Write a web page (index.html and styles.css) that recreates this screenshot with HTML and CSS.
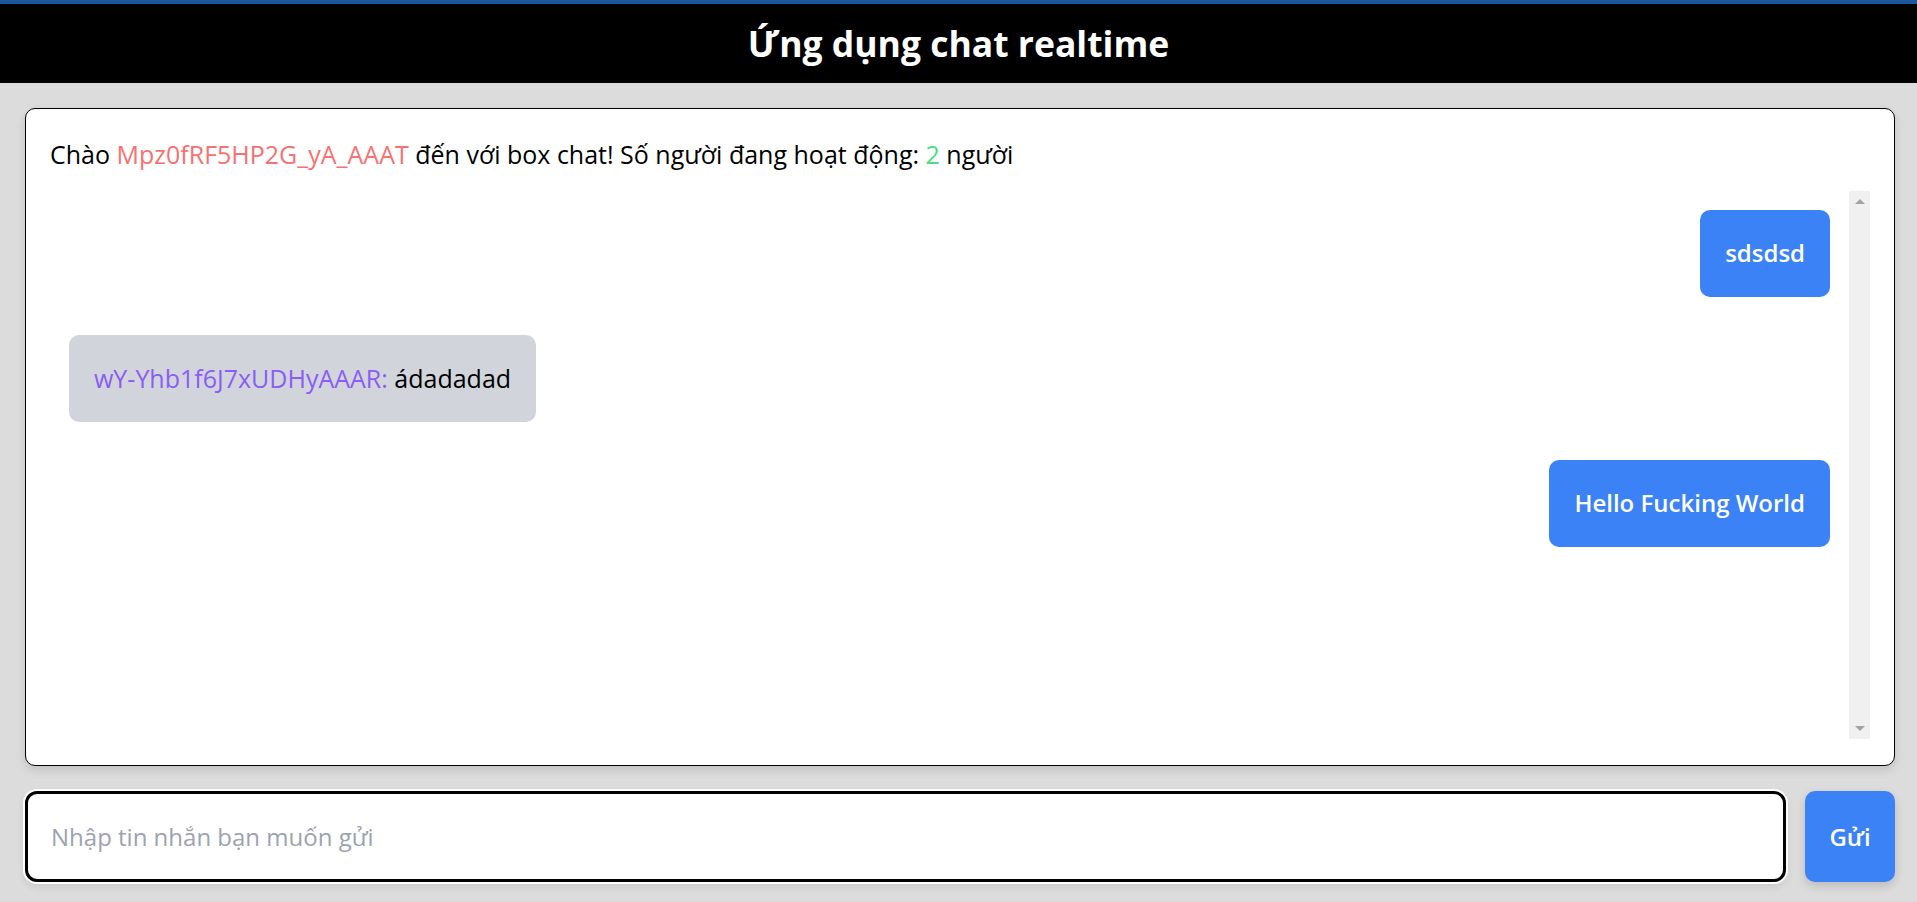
FILE: index.html
```html
<!DOCTYPE html>
<html lang="vi">
<head>
<meta charset="utf-8">
<title>Ứng dụng chat realtime</title>
<link rel="stylesheet" href="styles.css">
</head>
<body>
<header class="topbar">
  <h1 class="title">Ứng dụng chat realtime</h1>
</header>
<main class="page">
  <section class="chat-card">
    <p class="welcome">Chào <span class="me">Mpz0fRF5HP2G_yA_AAAT</span> đến với box chat! Số người đang hoạt động: <span class="count">2</span> người</p>
    <div class="messages-wrap">
      <div class="messages">
        <div class="msg msg-mine">sdsdsd</div>
        <div class="msg msg-other"><span class="sender">wY-Yhb1f6J7xUDHyAAAR:</span> ádadadad</div>
        <div class="msg msg-mine">Hello Fucking World</div>
      </div>
      <div class="scroll-rail" aria-hidden="true">
        <span class="scroll-btn"><span class="arrow arrow-up"></span></span>
        <span class="scroll-btn"><span class="arrow arrow-down"></span></span>
      </div>
    </div>
  </section>
  <form class="composer">
    <input class="composer-input" type="text" placeholder="Nhập tin nhắn bạn muốn gửi">
    <button class="send-btn" type="button">Gửi</button>
  </form>
</main>
</body>
</html>
```

FILE: styles.css
```css
html, body {
  height: 100%;
}

body {
  margin: 0;
  background: #dcdcdc;
  font-family: "Open Sans", "Noto Sans", sans-serif;
  display: flex;
  flex-direction: column;
  height: 100vh;
  overflow: hidden;
}

.topbar {
  flex-shrink: 0;
  height: 79px;
  border-top: 4px solid #1d579f;
  background: #000;
  display: flex;
  align-items: center;
  justify-content: center;
}

.title {
  margin: 0;
  color: #fff;
  font-size: 35.5px;
  font-weight: 700;
  line-height: 1;
}

.page {
  flex: 1;
  min-height: 0;
  display: flex;
  flex-direction: column;
  gap: 25px;
  padding: 25px 22px 20px 25px;
}

.chat-card {
  flex: 1;
  min-height: 0;
  display: flex;
  flex-direction: column;
  background: #fff;
  border: 1px solid #000;
  border-radius: 10px;
  padding: 28px 24px 26px;
  box-shadow: 0 4px 10px rgba(0, 0, 0, 0.12);
}

.welcome {
  margin: 0;
  font-size: 25px;
  line-height: 35px;
  color: #000;
}

.me {
  color: #f87171;
}

.count {
  color: #4ade80;
}

.messages-wrap {
  flex: 1;
  min-height: 0;
  margin-top: 19px;
  display: flex;
}

.messages {
  flex: 1;
  min-width: 0;
  overflow-y: auto;
  scrollbar-width: none;
  padding: 19px;
  display: flex;
  flex-direction: column;
  gap: 38px;
}

.scroll-rail {
  width: 21px;
  flex-shrink: 0;
  background: #f0f0f0;
  display: flex;
  flex-direction: column;
  justify-content: space-between;
}

.scroll-btn {
  height: 21px;
  display: flex;
  align-items: center;
  justify-content: center;
}

.arrow {
  width: 0;
  height: 0;
  border-left: 5px solid transparent;
  border-right: 5px solid transparent;
}

.arrow-up {
  border-bottom: 5px solid #a3a3a3;
}

.arrow-down {
  border-top: 5px solid #a3a3a3;
}

.msg {
  padding: 27px 25px 28px;
  border-radius: 10px;
  font-size: 25px;
  line-height: 32px;
}

.msg-mine {
  align-self: flex-end;
  background: #3b82f6;
  color: #fff;
  font-size: 24px;
  font-weight: 600;
}

.msg-other {
  align-self: flex-start;
  background: #d1d5db;
  color: #000;
}

.sender {
  color: #8b5cf6;
}

.composer {
  flex-shrink: 0;
  display: flex;
  gap: 19px;
  height: 91px;
  margin: 0;
}

.composer-input {
  flex: 1;
  min-width: 0;
  box-sizing: border-box;
  height: 91px;
  border: 3px solid #000;
  border-radius: 12px;
  box-shadow: 0 0 0 2px #fff, 0 4px 10px rgba(0, 0, 0, 0.1);
  padding: 0 23px;
  font-family: "Open Sans", "Noto Sans", sans-serif;
  font-size: 24px;
  color: #000;
  background: #fff;
  outline: none;
}

.composer-input::placeholder {
  color: #9ca3af;
}

.send-btn {
  width: 90px;
  height: 91px;
  border: 0;
  border-radius: 10px;
  background: #3b82f6;
  color: #fff;
  font-family: "Open Sans", "Noto Sans", sans-serif;
  font-size: 24px;
  font-weight: 600;
  box-shadow: 0 4px 10px rgba(0, 0, 0, 0.15);
  cursor: pointer;
}
```
